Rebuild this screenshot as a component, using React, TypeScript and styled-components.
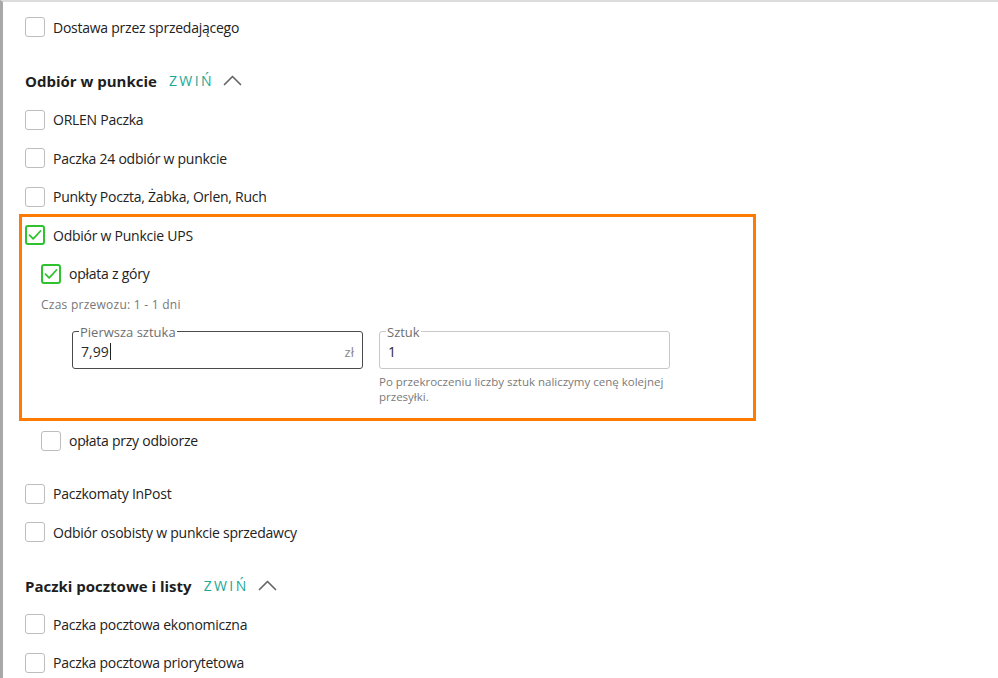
import React from "react";
import styled, { createGlobalStyle } from "styled-components";

const Global = createGlobalStyle`
  html, body { margin: 0; padding: 0; background: #fff; }
  body { font-family: "Open Sans", "Noto Sans", sans-serif; color: #2b2b2b; }
  *, *::before, *::after { box-sizing: border-box; }
`;

const Page = styled.div`
  width: 998px;
  height: 678px;
  overflow: hidden;
  border-top: 2px solid #dcdcdc;
  border-left: 3px solid #a8a8a8;
  padding: 6px 0 0 22px;
  position: relative;
`;

const Row = styled.label<{ $indent?: number }>`
  display: flex;
  align-items: center;
  gap: 8px;
  height: 38.5px;
  padding-left: ${(p) => p.$indent ?? 0}px;
  font-size: 14px;
  letter-spacing: -0.25px;
  color: #222;
`;

const Box = styled.span<{ $checked?: boolean }>`
  width: 20px;
  height: 20px;
  flex: none;
  border-radius: 3px;
  border: ${(p) => (p.$checked ? "2px solid #2fc22f" : "1px solid #bdbdbd")};
  display: flex;
  align-items: center;
  justify-content: center;
  background: #fff;
`;

const SectionHead = styled.div<{ $top: number }>`
  display: flex;
  align-items: center;
  height: 38.75px;
  margin-top: ${(p) => p.$top}px;
`;

const HeadTitle = styled.h3`
  margin: 0;
  font-size: 15px;
  font-weight: 700;
  color: #1e1e1e;
`;

const Collapse = styled.button`
  margin-left: 12px;
  border: 0;
  background: none;
  padding: 0;
  font-family: inherit;
  font-size: 14px;
  letter-spacing: 2.4px;
  color: #1aa894;
  display: flex;
  align-items: center;
  gap: 9px;
  cursor: pointer;
`;

const Highlight = styled.div`
  position: relative;
  &::after {
    content: "";
    position: absolute;
    top: -2px;
    left: -6px;
    width: 737px;
    height: 207px;
    border: 3px solid #ff7a00;
    pointer-events: none;
  }
`;

const Meta = styled.div`
  padding-left: 16px;
  margin-top: 4px;
  font-size: 12px;
  letter-spacing: 0.25px;
  line-height: 16px;
  color: #777;
`;

const Fields = styled.div`
  display: flex;
  gap: 16px;
  padding-left: 47px;
  margin-top: 11px;
  height: 97.5px;
`;

const FieldCol = styled.div`
  display: flex;
  flex-direction: column;
  width: 291px;
`;

const Outline = styled.fieldset<{ $focused?: boolean }>`
  margin: 0;
  padding: 0 8px 0 6px;
  border-radius: 3px;
  border: ${(p) => (p.$focused ? "1.5px solid #4a4a4a" : "1px solid #c8c8c8")};
  min-width: 0;
`;

const Legend = styled.legend`
  padding: 0 1px;
  font-size: 13px;
  line-height: 16px;
  color: #6f6f6f;
`;

const InputLine = styled.div`
  height: 28.5px;
  padding-bottom: 5px;
  display: flex;
  align-items: center;
`;

const Value = styled.span`
  flex: 1;
  font-size: 14px;
  color: #2a2a2a;
  padding-left: 2px;
  display: flex;
  align-items: center;
`;

const Caret = styled.span`
  display: inline-block;
  width: 1px;
  height: 17px;
  background: #222;
  margin-left: 1px;
`;

const Suffix = styled.span`
  font-size: 13px;
  color: #888;
`;

const Help = styled.div`
  margin-top: 5px;
  font-size: 11.5px;
  line-height: 15px;
  color: #7a7a7a;
  width: 300px;
`;

const Gap = styled.div<{ $h: number }>`
  height: ${(p) => p.$h}px;
`;

const Check = () => (
  <svg width="14" height="12" viewBox="0 0 14 12" fill="none">
    <path d="M1.5 6.2 L5.2 9.8 L12.5 2" stroke="#2fc22f" strokeWidth="1.8" strokeLinecap="round" strokeLinejoin="round" />
  </svg>
);

const Chevron = () => (
  <svg width="19" height="11" viewBox="0 0 19 11" fill="none">
    <path d="M1.5 9.5 L9.5 1.5 L17.5 9.5" stroke="#666" strokeWidth="1.7" strokeLinecap="round" strokeLinejoin="round" />
  </svg>
);

const Option = ({ label, checked, indent }: { label: string; checked?: boolean; indent?: number }) => (
  <Row $indent={indent}>
    <Box $checked={checked}>{checked && <Check />}</Box>
    {label}
  </Row>
);

const Head = ({ title, top }: { title: string; top: number }) => (
  <SectionHead $top={top}>
    <HeadTitle>{title}</HeadTitle>
    <Collapse>
      ZWIŃ
      <Chevron />
    </Collapse>
  </SectionHead>
);

export default function App() {
  return (
    <>
      <Global />
      <Page>
        <Option label="Dostawa przez sprzedającego" />
        <Head title="Odbiór w punkcie" top={15} />
        <Option label="ORLEN Paczka" />
        <Option label="Paczka 24 odbiór w punkcie" />
        <Option label="Punkty Poczta, Żabka, Orlen, Ruch" />
        <Highlight>
          <Option label="Odbiór w Punkcie UPS" checked />
          <Option label="opłata z góry" checked indent={16} />
          <Meta>Czas przewozu: 1 - 1 dni</Meta>
          <Fields>
            <FieldCol>
              <Outline $focused>
                <Legend>Pierwsza sztuka</Legend>
                <InputLine>
                  <Value>
                    7,99
                    <Caret />
                  </Value>
                  <Suffix>zł</Suffix>
                </InputLine>
              </Outline>
            </FieldCol>
            <FieldCol>
              <Outline>
                <Legend>Sztuk</Legend>
                <InputLine>
                  <Value>1</Value>
                </InputLine>
              </Outline>
              <Help>Po przekroczeniu liczby sztuk naliczymy cenę kolejnej przesyłki.</Help>
            </FieldCol>
          </Fields>
        </Highlight>
        <Option label="opłata przy odbiorze" indent={16} />
        <Gap $h={14.5} />
        <Option label="Paczkomaty InPost" />
        <Option label="Odbiór osobisty w punkcie sprzedawcy" />
        <Head title="Paczki pocztowe i listy" top={15} />
        <Option label="Paczka pocztowa ekonomiczna" />
        <Option label="Paczka pocztowa priorytetowa" />
      </Page>
    </>
  );
}
